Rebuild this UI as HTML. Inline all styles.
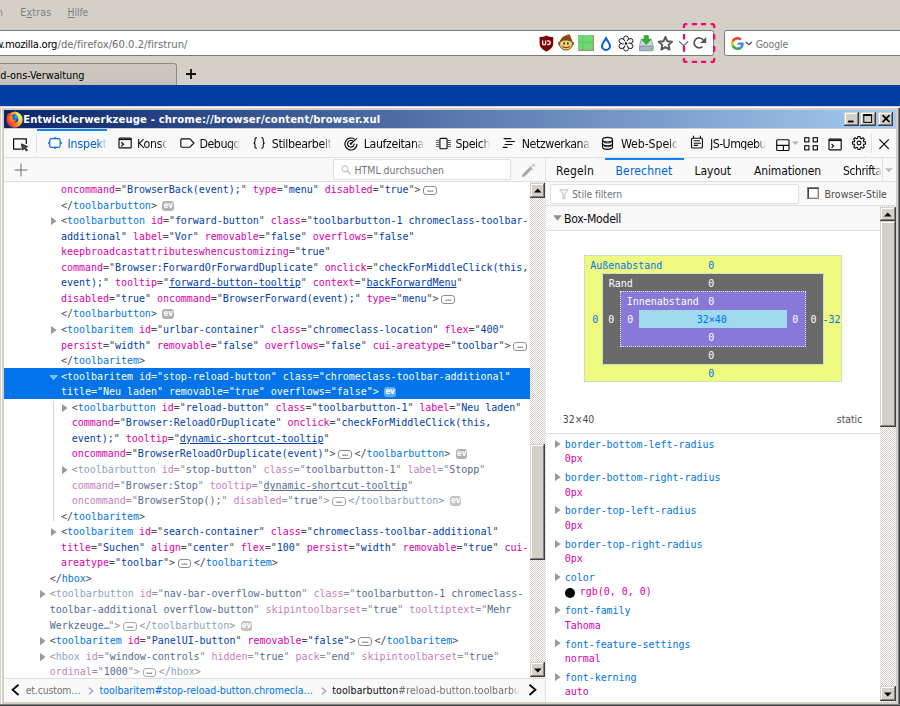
<!DOCTYPE html>
<html lang="de"><head><meta charset="utf-8"><title>Entwicklerwerkzeuge - chrome://browser/content/browser.xul</title>
<style>
html,body{margin:0;padding:0;overflow:hidden}
html{width:900px;height:706px}
body{width:900px;height:706px;overflow:hidden;position:relative;background:#d4d0c8;font-family:"DejaVu Sans Condensed","DejaVu Sans","Liberation Sans",sans-serif}
div,svg.ab,.tw{position:absolute}
.s{white-space:pre;line-height:1}
.s u{text-decoration:underline;text-underline-offset:1px}
.fade{-webkit-mask-image:linear-gradient(to right,#000 calc(100% - 9px),transparent 100%);mask-image:linear-gradient(to right,#000 calc(100% - 9px),transparent 100%)}
.m,.ln{font-family:"DejaVu Sans Mono","Liberation Mono",monospace;font-size:10px;letter-spacing:-0.03px;white-space:pre}
.m{line-height:1}
.ln{line-height:15.555px;height:15.555px;color:#4a4a4f}
.ln .t{color:#0074e8}.ln .a{color:#dd00a9}.ln .v{color:#003eaa}.ln .p{color:#4a4a4f}
.ln .u{text-decoration:underline}
.ln.sel,.ln.sel span{color:#fff}
.ln.dim{color:#8f8f95}.dim .t{color:#8fa3bd}.dim .a{color:#c781c0}.dim .v{color:#586b92}.dim .p{color:#8f8f95}.dim i.bv{background:#c4c4c6}.dim i.be{border-color:#a9a9ac}
.tw{fill:#9a9a9e}
.ln.sel .tw{fill:#7db9ff}
i.be,i.bv{display:inline-block;overflow:hidden;font-style:normal;box-sizing:border-box;position:relative;letter-spacing:0}
i.be{width:13.4px;height:9.7px;margin:0 2.7px 0 2.9px;border:1px solid #8d8d90;border-radius:3px;vertical-align:-2.2px}
i.be b{position:absolute;left:2.7px;top:-2.6px;font-size:10px;font-weight:normal;color:#77777c;line-height:10px}
i.bv{width:11.5px;height:9.7px;margin:0 0 0 5.6px;border-radius:3px;background:#b1b1b3;color:#fff;font-size:8px;line-height:10.6px;text-align:center;font-weight:bold;vertical-align:-1.7px;font-family:"DejaVu Sans Condensed","Liberation Sans",sans-serif}
.ln.sel i.bv{background:#5fa9f3}
.chk{background-image:repeating-conic-gradient(#ffffff 0 25%,#d4d0c8 0 50%);background-size:2px 2px}
.btn3{background:#d4d0c8;box-shadow:inset -1px -1px 0 #404040,inset 1px 1px 0 #d4d0c8,inset -2px -2px 0 #808080,inset 2px 2px 0 #fff}
.hl{background:#e0e0e2}
</style></head>
<body>
<!-- ===== browser chrome ===== -->
<div style="left:-10px;top:30px;width:722px;height:24px;background:#fff;border:1px solid #7b7b7b;border-radius:2.5px;box-sizing:content-box"></div>
<div style="left:724px;top:30px;width:200px;height:24px;background:#fff;border:1px solid #7b7b7b;border-radius:2.5px"></div>
<!-- tab -->
<div style="left:-10px;top:63px;width:185px;height:22.5px;background:linear-gradient(#ccc8c0 0%,#cac6be 70%,#bcb8b0 100%);border:1px solid #8c8a85;border-bottom:0;border-radius:0 3px 0 0"></div>
<svg class="ab" style="left:186px;top:69px" width="10" height="10" viewBox="0 0 10 10"><path d="M5 0V10M0 5H10" stroke="#0c0c0d" stroke-width="1.8" fill="none"/></svg>
<!-- desktop blue band -->
<div style="left:0;top:85px;width:900px;height:21px;background:#003da5"></div>
<!-- ===== devtools window frame ===== -->
<div style="left:0;top:105.7px;width:900px;height:601px;background:#d4d0c8"></div>
<div style="left:1px;top:106.6px;width:897px;height:600px;border-left:1px solid #fff;border-top:1px solid #fff"></div>
<div style="left:897.6px;top:108px;width:3px;height:600px;background:linear-gradient(to right,#808080 0,#808080 1.2px,#404040 1.2px)"></div>
<div style="left:0;top:703.7px;width:900px;height:3px;background:#808080"></div>
<div style="left:0;top:705px;width:900px;height:1px;background:#404040"></div>
<!-- title bar -->
<div style="left:4px;top:110px;width:892px;height:18px;background:linear-gradient(to right,#0a246a 0%,#a6caf0 100%)"></div>
<!-- window buttons -->
<div class="btn3" style="left:844.3px;top:112px;width:15.2px;height:14px"></div>
<div class="btn3" style="left:860.4px;top:112px;width:15.2px;height:14px"></div>
<div class="btn3" style="left:878.3px;top:112px;width:15.2px;height:14px"></div>
<svg class="ab" style="left:844px;top:112px" width="50" height="14" viewBox="0 0 50 14"><path d="M4 9.5H9.5" stroke="#000" stroke-width="1.9"/><rect x="19.8" y="3" width="7.8" height="7.4" fill="none" stroke="#000" stroke-width="1"/><path d="M19.3 3H28.1" stroke="#000" stroke-width="1.8"/><path d="M38.6 3.2L45.6 10.2M45.6 3.2L38.6 10.2" stroke="#000" stroke-width="1.7"/></svg>
<!-- content area -->
<div style="left:4px;top:128.6px;width:892px;height:573.4px;background:#fff"></div>
<!-- devtools main toolbar -->
<div style="left:4px;top:128.6px;width:892px;height:28.4px;background:#f9f9fa"></div>
<div class="hl" style="left:4px;top:157px;width:892px;height:1px"></div>
<div style="left:37px;top:128.7px;width:70px;height:2.2px;background:#0a84ff"></div>
<div class="hl" style="left:36px;top:133px;width:1px;height:20px"></div>
<div class="hl" style="left:871px;top:133px;width:1px;height:20px"></div>
<!-- markup toolbar + sidebar tabs -->
<div style="left:4px;top:158px;width:892px;height:23px;background:#f9f9fa"></div>
<div class="hl" style="left:4px;top:181px;width:892px;height:1px"></div>
<div class="hl" style="left:545px;top:158px;width:1px;height:544px"></div>
<div style="left:605px;top:158px;width:79px;height:2px;background:#0a84ff"></div>
<div class="hl" style="left:881.5px;top:158px;width:1px;height:23px"></div>
<!-- html search box -->
<div style="left:332.5px;top:159px;width:178.7px;height:20.5px;background:#fff;border:1px solid #e0e0e2;border-radius:2px;box-sizing:border-box"></div>
<!-- filter bar -->
<div style="left:546px;top:182px;width:350px;height:23px;background:#f9f9fa"></div>
<div class="hl" style="left:546px;top:205px;width:350px;height:1px"></div>
<div style="left:549.5px;top:184px;width:249.5px;height:19.5px;background:#fff;border:1px solid #e0e0e2;border-radius:2px;box-sizing:border-box"></div>
<div style="left:807px;top:187px;width:12.2px;height:12.2px;background:#fff;box-sizing:border-box;border:1px solid #808080;box-shadow:inset 1px 1px 0 #404040,inset -1px -1px 0 #d4d0c8"></div>
<!-- box model header -->
<div style="left:546px;top:206px;width:334px;height:24px;background:#f9f9fa"></div>
<div class="hl" style="left:546px;top:230px;width:334px;height:1px"></div>
<svg class="ab" style="left:552.5px;top:214.5px;fill:#8f8f93" width="9" height="6" viewBox="0 0 9 6"><path d="M0.2 0.3H8.8L4.5 5.7Z"/></svg>
<div class="hl" style="left:546px;top:433px;width:334px;height:1px"></div>
<!-- selected row -->
<div style="left:4px;top:368.2px;width:526px;height:30.7px;background:#0074e8"></div>
<!-- indent guide -->
<div style="left:53.2px;top:401px;width:1.2px;height:120px;background:#d4d4d8"></div>
<!-- left scrollbar -->
<div class="chk" style="left:530px;top:182px;width:15.5px;height:495.5px"></div>
<div class="btn3" style="left:530px;top:182.5px;width:15.3px;height:15px"></div>
<div class="btn3" style="left:530px;top:444.4px;width:15.3px;height:115.4px"></div>
<div class="btn3" style="left:530px;top:661.7px;width:15.3px;height:15.2px"></div>
<svg class="ab" style="left:534px;top:187.5px" width="8" height="5" viewBox="0 0 8 5"><path d="M0 4.6L3.8 0.5L7.6 4.6Z"/></svg>
<svg class="ab" style="left:534px;top:667.5px" width="8" height="5" viewBox="0 0 8 5"><path d="M0 0.4L3.8 4.5L7.6 0.4Z"/></svg>
<!-- right scrollbar -->
<div class="chk" style="left:880.4px;top:206px;width:15.6px;height:496px"></div>
<div class="btn3" style="left:880.4px;top:206.6px;width:15.3px;height:14.2px"></div>
<div class="btn3" style="left:880.4px;top:220.8px;width:15.3px;height:206.3px"></div>
<div class="btn3" style="left:880.4px;top:686.3px;width:15.3px;height:15px"></div>
<svg class="ab" style="left:884.4px;top:211.5px" width="8" height="5" viewBox="0 0 8 5"><path d="M0 4.6L3.8 0.5L7.6 4.6Z"/></svg>
<svg class="ab" style="left:884.4px;top:691.5px" width="8" height="5" viewBox="0 0 8 5"><path d="M0 0.4L3.8 4.5L7.6 0.4Z"/></svg>
<!-- breadcrumbs -->
<div style="left:4px;top:678px;width:541px;height:24px;background:#f9f9fa"></div>
<div class="hl" style="left:4px;top:677.5px;width:541px;height:1px"></div>
<svg class="ab" style="left:10.5px;top:684px" width="9" height="12" viewBox="0 0 9 12"><path d="M7.5 0.7L1.6 5.8L7.5 11" fill="none" stroke="#0c0c0d" stroke-width="1.9"/></svg>
<svg class="ab" style="left:527.5px;top:684px" width="9" height="12" viewBox="0 0 9 12"><path d="M1.5 0.7L7.4 5.8L1.5 11" fill="none" stroke="#0c0c0d" stroke-width="1.9"/></svg>
<svg class="ab" style="left:87.5px;top:686.5px" width="6" height="8" viewBox="0 0 6 8"><path d="M0.8 0.8L4.8 4L0.8 7.2" fill="none" stroke="#9a9ad0" stroke-width="1.3"/></svg>
<svg class="ab" style="left:320.5px;top:686.5px" width="6" height="8" viewBox="0 0 6 8"><path d="M0.8 0.8L4.8 4L0.8 7.2" fill="none" stroke="#9a9ad0" stroke-width="1.3"/></svg>
<!-- firefox logo -->
<svg class="ab" style="left:5.5px;top:110.5px" width="17" height="17" viewBox="0 0 17 17">
<defs><linearGradient id="fxg" x1="0" y1="0.75" x2="1" y2="0.25"><stop offset="0" stop-color="#f5184c"/><stop offset="0.3" stop-color="#ff5a1f"/><stop offset="0.62" stop-color="#ffa51f"/><stop offset="0.85" stop-color="#ffd83a"/><stop offset="1" stop-color="#fff36e"/></linearGradient>
<radialGradient id="fxb" cx="0.6" cy="0.3" r="0.8"><stop offset="0" stop-color="#00b8f0"/><stop offset="0.5" stop-color="#1560e0"/><stop offset="1" stop-color="#3a2a9a"/></radialGradient></defs>
<circle cx="8.6" cy="8.7" r="8" fill="url(#fxg)"/>
<path d="M1.4 6.6C0.8 4.6 1.5 2.8 2.5 1.8C2.8 3 3.5 3.6 4.6 4Z" fill="#ff3a2a"/>
<path d="M9.4 0.3C10.4 0.9 11.2 2 11.4 3.2L9.2 2.6Z" fill="#ffd83a"/>
<circle cx="9.2" cy="7.2" r="4.3" fill="url(#fxb)"/>
<path d="M3.4 5.4C5 4.6 6.6 5 7.4 6.2C6.6 6.6 6.4 7.4 7 8.2C7.8 9 9.2 8.8 10 8.2C9.8 10.4 7.8 11.6 5.9 11C4 10.4 3 8 3.4 5.4Z" fill="#ff7a1f"/>
<path d="M10 0.9C12.6 1.9 14.6 4.2 14.6 7.2C14.6 9.6 13 11.6 11 12.2C12.6 10.8 13 8.6 12 6.8C11.8 5.6 11.4 4.6 10.2 3.8C10.8 2.8 10.6 1.8 10 0.9Z" fill="#ffe44a"/>
</svg>
<!-- pick element -->
<svg class="ab" style="left:12px;top:137px" width="18" height="15" viewBox="0 0 18 15"><path d="M9.6 12.1H1.6V1.8H14.3V7" fill="none" stroke="#0c0c0d" stroke-width="1.2"/><path d="M9.3 6.8L15.8 9.6L13.3 10.6L15.6 13.2L14.4 14.1L12.2 11.4L10.6 13.2Z" fill="#4a4a4f" stroke="#0c0c0d" stroke-width=".7"/></svg>
<!-- inspector -->
<svg class="ab" style="left:46px;top:135px" width="18" height="16" viewBox="0 0 18 16"><rect x="3.7" y="3.7" width="10.5" height="8.6" rx="1.8" fill="none" stroke="#0a6ce6" stroke-width="1.25"/><path d="M9 2V3.4M9 12.6V14M2 8H3.4M14.6 8H16" stroke="#0a6ce6" stroke-width="1.3"/></svg>
<!-- console -->
<svg class="ab" style="left:117px;top:136px" width="16" height="14" viewBox="0 0 16 14"><rect x="2" y="2" width="12.2" height="9.9" rx="1" fill="none" stroke="#0c0c0d" stroke-width="1.15"/><path d="M2 3.3H14.2" stroke="#0c0c0d" stroke-width="1.6"/><path d="M4.2 6.2L6.6 8.3L4.2 10.4" fill="none" stroke="#0c0c0d" stroke-width="1.2"/></svg>
<!-- debugger -->
<svg class="ab" style="left:179px;top:136px" width="17" height="14" viewBox="0 0 17 14"><path d="M2.9 2.8H10.8L15 7L10.8 11.2H2.9Q1.8 11.2 1.8 10.1V3.9Q1.8 2.8 2.9 2.8Z" fill="none" stroke="#0c0c0d" stroke-width="1.15"/></svg>
<!-- style editor braces -->
<svg class="ab" style="left:252px;top:136px" width="15" height="14" viewBox="0 0 15 14"><path d="M4.8 1.6Q3 1.6 3 3.2V5.2Q3 7 1.4 7Q3 7 3 8.8V10.8Q3 12.4 4.8 12.4" fill="none" stroke="#0c0c0d" stroke-width="1.1"/><path d="M9.4 1.6Q11.2 1.6 11.2 3.2V5.2Q11.2 7 12.8 7Q11.2 7 11.2 8.8V10.8Q11.2 12.4 9.4 12.4" fill="none" stroke="#0c0c0d" stroke-width="1.1"/></svg>
<!-- performance -->
<svg class="ab" style="left:343px;top:135.5px" width="16" height="15" viewBox="0 0 16 15"><path d="M11.6 3.2A6 6 0 1 0 14 8" fill="none" stroke="#0c0c0d" stroke-width="1.2"/><path d="M10.2 5.4A3.3 3.3 0 1 0 11.2 7.6" fill="none" stroke="#0c0c0d" stroke-width="1.2"/><path d="M8 7.6L14 2.4" stroke="#0c0c0d" stroke-width="1.15"/><circle cx="8" cy="7.6" r="1.2" fill="#0c0c0d"/></svg>
<!-- memory -->
<svg class="ab" style="left:434.5px;top:136.5px" width="17" height="13" viewBox="0 0 17 13"><rect x="4.9" y="1.3" width="7.2" height="10.4" rx="1" fill="none" stroke="#0c0c0d" stroke-width="1.15"/><path d="M1 3.5H4M1 5.5H4M1 7.5H4M1 9.5H4M13 3.5H16M13 5.5H16M13 7.5H16M13 9.5H16" stroke="#4a4a4f" stroke-width=".9"/></svg>
<!-- network -->
<svg class="ab" style="left:502px;top:137px" width="14" height="12" viewBox="0 0 14 12"><path d="M1.6 1.6H9.3M3.9 4.5H12.9M2.6 7.5H10.4M0.8 10.4H5.4" stroke="#0c0c0d" stroke-width="1.2"/></svg>
<!-- storage -->
<svg class="ab" style="left:600px;top:135px" width="15" height="16" viewBox="600 135 15 16"><g fill="none" stroke="#0c0c0d" stroke-width="1.15"><ellipse cx="607.5" cy="139.7" rx="5" ry="2.3"/><path d="M602.5 139.7V147.1A5 2.3 0 0 0 612.5 147.1V139.7"/><path d="M602.5 143.4A5 2.3 0 0 0 612.5 143.4"/><path d="M603.6 142.3A4.4 1.4 0 0 0 611.4 142.3M603.6 146A4.4 1.4 0 0 0 611.4 146" stroke-width=".8"/></g></svg>
<!-- scratchpad -->
<svg class="ab" style="left:690px;top:135px" width="14" height="15" viewBox="0 0 14 15"><rect x="1.5" y="3.2" width="10.9" height="9.8" rx="1" fill="none" stroke="#0c0c0d" stroke-width="1.1"/><path d="M3.5 0.8V3.2M10.4 0.8V3.2" stroke="#0c0c0d" stroke-width="1.15"/><path d="M3.7 5.8H9.9M3.7 8.2H11M3.7 10.4H7.9" stroke="#0c0c0d" stroke-width="1.1"/></svg>
<!-- layout chooser -->
<svg class="ab" style="left:775px;top:137.5px" width="25" height="14" viewBox="0 0 25 14"><rect x="1.7" y="1.7" width="12.3" height="10.8" rx=".8" fill="none" stroke="#0c0c0d" stroke-width="1.15"/><path d="M1.7 7.3H14M8.4 7.3V12.5" stroke="#0c0c0d" stroke-width="1.15"/><path d="M17.1 3.6H23.7L20.4 7.1Z" fill="#b1b1b3"/></svg>
<!-- grid -->
<svg class="ab" style="left:803px;top:136px" width="16" height="16" viewBox="803 136 16 16"><g fill="none" stroke="#0c0c0d" stroke-width="1.15"><rect x="804.7" y="137.7" width="4.2" height="4.2"/><rect x="813.2" y="137.7" width="4.2" height="4.2"/><rect x="804.7" y="145.7" width="4.2" height="4.2"/><rect x="813.2" y="145.7" width="4.2" height="4.2"/></g></svg>
<!-- split console -->
<svg class="ab" style="left:827px;top:137px" width="16" height="15" viewBox="0 0 16 15"><rect x="2" y="2" width="12.2" height="10.8" rx=".8" fill="none" stroke="#0c0c0d" stroke-width="1.15"/><path d="M2 3.2H14.2" stroke="#0c0c0d" stroke-width="1.7"/><path d="M4.6 7L6.6 8.9L4.6 10.8" fill="none" stroke="#0c0c0d" stroke-width="1.15"/></svg>
<!-- gear -->
<svg class="ab" style="left:850.5px;top:135px" width="16" height="16" viewBox="-8 -8 16 16"><path d="M-1.26 -4.74 L-1.12 -6.50 L1.12 -6.50 L1.26 -4.74 L2.46 -4.24 L3.81 -5.39 L5.39 -3.81 L4.24 -2.46 L4.74 -1.26 L6.50 -1.12 L6.50 1.12 L4.74 1.26 L4.24 2.46 L5.39 3.81 L3.81 5.39 L2.46 4.24 L1.26 4.74 L1.12 6.50 L-1.12 6.50 L-1.26 4.74 L-2.46 4.24 L-3.81 5.39 L-5.39 3.81 L-4.24 2.46 L-4.74 1.26 L-6.50 1.12 L-6.50 -1.12 L-4.74 -1.26 L-4.24 -2.46 L-5.39 -3.81 L-3.81 -5.39 L-2.46 -4.24Z" fill="none" stroke="#0c0c0d" stroke-width="1.1" stroke-linejoin="round"/><circle r="1.9" fill="none" stroke="#0c0c0d" stroke-width="1.1"/></svg>
<!-- close x -->
<svg class="ab" style="left:878px;top:138px" width="12" height="12" viewBox="0 0 12 12"><path d="M1.4 1.3L10.8 10.9M10.8 1.3L1.4 10.9" stroke="#0c0c0d" stroke-width="1.2"/></svg>
<!-- plus (new node) -->
<svg class="ab" style="left:13.5px;top:162.5px" width="14" height="14" viewBox="0 0 14 14"><path d="M7 0.6V13.4M0.6 7H13.4" stroke="#6a6a6f" stroke-width="1"/></svg>
<!-- magnifier -->
<svg class="ab" style="left:341px;top:165px" width="11" height="10" viewBox="0 0 11 10"><circle cx="4" cy="3.8" r="3.1" fill="none" stroke="#b9b9bc" stroke-width="1"/><path d="M6.3 6.2L10 9.4" stroke="#b9b9bc" stroke-width="1.2"/></svg>
<!-- eyedropper -->
<svg class="ab" style="left:521px;top:163px" width="15" height="15" viewBox="0 0 15 15"><path d="M1.2 13.8L2 11.2L8.6 4.6L10.4 6.4L3.8 13Z" fill="#a9a9ac" stroke="#9a9a9d" stroke-width=".6"/><path d="M8.2 3L12 6.8" stroke="#9a9a9d" stroke-width="1"/><path d="M10 4.6L13.6 1M11.4 0.6L14.2 3.6" stroke="#a4a4a7" stroke-width=".9"/></svg>
<!-- filter funnel -->
<svg class="ab" style="left:558.5px;top:188.5px" width="10" height="11" viewBox="0 0 10 11"><path d="M0.7 0.8H8.9L5.8 5V9.8H3.9V5Z" fill="#f4f4f5" stroke="#c2c2c5" stroke-width="1"/></svg>
<!-- sidebar tabs dropdown arrow -->
<svg class="ab" style="left:885px;top:168px" width="8" height="5" viewBox="0 0 8 5"><path d="M0 0.2H7.6L3.8 4.2Z" fill="#b9b9bc"/></svg>
<!-- ===== browser toolbar icons ===== -->
<!-- ublock -->
<svg class="ab" style="left:538.5px;top:34.5px" width="15" height="17" viewBox="0 0 15 17"><path d="M7.4 0.4C5.4 1.6 3 2 0.6 2.1V8.4C0.6 12.4 4.4 15 7.4 16.4C10.4 15 14.2 12.4 14.2 8.4V2.1C11.8 2 9.4 1.6 7.4 0.4Z" fill="#800000"/><path d="M3.6 5.6V8.4Q3.6 9.9 5.1 9.9Q6.6 9.9 6.6 8.4V5.6" fill="none" stroke="#fff" stroke-width="1.3"/><path d="M8.2 5.9H9.4Q11.2 5.9 11.2 7.7Q11.2 9.5 9.4 9.5H8.2" fill="none" stroke="#fff" stroke-width="1.3"/></svg>
<!-- greasemonkey -->
<svg class="ab" style="left:557.5px;top:34px" width="16" height="17" viewBox="0 0 16 17"><circle cx="1.6" cy="9.6" r="1.5" fill="#e0a850" stroke="#6b3d0c" stroke-width=".7"/><circle cx="14.4" cy="9.6" r="1.5" fill="#e0a850" stroke="#6b3d0c" stroke-width=".7"/><ellipse cx="8" cy="10" rx="6.5" ry="6.1" fill="#f5cb72" stroke="#6b3d0c" stroke-width=".9"/><path d="M2.3 7.8C2.8 3.6 6.4 1.7 11.9 0.6C11.3 1.6 11.7 2.2 12.7 2.6C12.1 3 12.3 3.8 13.1 4.4C13.6 5.6 13.7 6.6 13.7 7.8C11 5.6 5 5.6 2.3 7.8Z" fill="#8a4a10" stroke="#6b3d0c" stroke-width=".5"/><ellipse cx="5.9" cy="9.3" rx="1.5" ry="1.8" fill="#e8f0c0"/><ellipse cx="10.1" cy="9.3" rx="1.5" ry="1.8" fill="#e8f0c0"/><ellipse cx="6.1" cy="9.4" rx=".8" ry="1.3" fill="#0a3a10"/><ellipse cx="9.9" cy="9.4" rx=".8" ry="1.3" fill="#0a3a10"/><path d="M4 12.6Q8 15 12 12.6" fill="none" stroke="#7a2a10" stroke-width="1"/></svg>
<!-- green square -->
<svg class="ab" style="left:578px;top:35px" width="16" height="16" viewBox="0 0 16 16"><rect x="0" y="0" width="15.8" height="15.8" fill="#6fd873"/><path d="M0 7.4H15.8M4.8 0V15.8" stroke="#5cc765" stroke-width="1.2"/><path d="M15.4 0V15.8M0 15.4H15.8" stroke="#b8706a" stroke-width=".8"/></svg>
<!-- blue drop -->
<svg class="ab" style="left:600px;top:36px" width="12" height="15" viewBox="0 0 12 15"><path d="M6 2.2C4.6 5 2 7.4 2 10A4 3.9 0 0 0 10 10C10 7.4 7.4 5 6 2.2Z" fill="none" stroke="#0a5ae0" stroke-width="2"/></svg>
<!-- flower -->
<svg class="ab" style="left:618px;top:34.5px" width="16" height="17" viewBox="-8 -8.5 16 17"><g fill="#fff" stroke="#1a1a1a" stroke-width=".9"><ellipse cx="0" cy="-4.6" rx="2.5" ry="3"/><ellipse cx="0" cy="4.6" rx="2.5" ry="3"/><ellipse cx="0" cy="-4.6" rx="2.5" ry="3" transform="rotate(60)"/><ellipse cx="0" cy="-4.6" rx="2.5" ry="3" transform="rotate(120)"/><ellipse cx="0" cy="-4.6" rx="2.5" ry="3" transform="rotate(240)"/><ellipse cx="0" cy="-4.6" rx="2.5" ry="3" transform="rotate(300)"/></g><circle r="2.4" fill="#fff"/><circle r="1.3" fill="#111"/></svg>
<!-- download tray -->
<svg class="ab" style="left:639px;top:34.5px" width="15" height="17" viewBox="0 0 15 17"><path d="M2.2 4.2H12.4L14.2 11.4H0.4Z" fill="#cfd8e0" stroke="#7f8c99" stroke-width=".7"/><rect x="0.4" y="11.2" width="13.8" height="4.6" rx=".8" fill="#aab6c2" stroke="#71808e" stroke-width=".7"/><circle cx="12" cy="13.6" r=".7" fill="#3c3"/><path d="M5.2 0.6H9.4V4.6H12L7.3 9.6L2.6 4.6H5.2Z" fill="#2fb52f" stroke="#1a8a1a" stroke-width=".6"/></svg>
<!-- star -->
<svg class="ab" style="left:656.5px;top:34.5px" width="17" height="17" viewBox="0 0 17 17"><path d="M8.4 1.9L10.35 6.3L15.1 6.75L11.5 9.9L12.55 14.6L8.4 12.15L4.25 14.6L5.3 9.9L1.7 6.75L6.45 6.3Z" fill="none" stroke="#585858" stroke-width="1.9" stroke-linejoin="round"/></svg>
<!-- dropmarker chevron -->
<svg class="ab" style="left:677.5px;top:40px" width="11" height="7" viewBox="0 0 11 7"><path d="M1 1.4L5.7 5.7L10.2 1.4" fill="none" stroke="#6a6a6a" stroke-width="1.2"/></svg>
<!-- reload -->
<svg class="ab" style="left:692px;top:36px" width="16" height="14" viewBox="692 36 16 14"><path d="M703.2 40.1A4.95 4.95 0 1 0 702.4 46.6" fill="none" stroke="#555" stroke-width="1.7"/><path d="M706.2 36.9V42.9H700.2Z" fill="#555"/></svg>
<!-- google G -->
<svg class="ab" style="left:730.5px;top:36.5px" width="13" height="13" viewBox="0 0 48 48"><path fill="#EA4335" d="M24 9.5c3.54 0 6.71 1.22 9.21 3.6l6.85-6.85C35.9 2.38 30.47 0 24 0 14.62 0 6.51 5.38 2.56 13.22l7.98 6.19C12.43 13.72 17.74 9.5 24 9.5z"/><path fill="#4285F4" d="M46.98 24.55c0-1.57-.15-3.09-.38-4.55H24v9.02h12.94c-.58 2.96-2.26 5.48-4.78 7.18l7.73 6c4.51-4.18 7.09-10.36 7.09-17.65z"/><path fill="#FBBC05" d="M10.53 28.59c-.48-1.45-.76-2.99-.76-4.59s.27-3.14.76-4.59l-7.98-6.19C.92 16.46 0 20.12 0 24c0 3.88.92 7.54 2.56 10.78l7.97-6.19z"/><path fill="#34A853" d="M24 48c6.48 0 11.93-2.13 15.89-5.81l-7.73-6c-2.15 1.45-4.92 2.3-8.16 2.3-6.26 0-11.57-4.22-13.47-9.91l-7.98 6.19C6.51 42.62 14.62 48 24 48z"/></svg>
<svg class="ab" style="left:745px;top:40.5px" width="8" height="5" viewBox="0 0 8 5"><path d="M0.9 0.9L3.9 3.7L6.9 0.9" fill="none" stroke="#4a4a4f" stroke-width="1.3"/></svg>
<!-- highlighter dashed box -->
<svg class="ab" style="left:680px;top:20px" width="40" height="46" viewBox="680 20 40 46"><g fill="none" stroke="#ff0066" stroke-width="2.2"><path d="M684 27.9V25.8Q684 24.1 685.7 24.1H687.3M710.7 24.1H712.5Q714.2 24.1 714.2 25.8V27.9M714.2 58V60.2Q714.2 61.9 712.5 61.9H710.7M687.3 61.9H685.7Q684 61.9 684 60.2V58"/><path d="M691.9 24.1H697.1M701.1 24.1H706.1M691.9 61.9H697.1M701.1 61.9H706.1M684 34.1V39.6M684 46V51.8M714.2 34.1V39.4M714.2 46V51.7"/></g></svg>

<!-- ===== code ===== -->
<div class="ln" style="left:61.0px;top:182.00px"><span class="a">oncommand</span><span class="p">=</span><span class="p">"</span><span class="v">BrowserBack(event);</span><span class="p">"</span> <span class="a">type</span><span class="p">=</span><span class="p">"</span><span class="v">menu</span><span class="p">"</span> <span class="a">disabled</span><span class="p">=</span><span class="p">"</span><span class="v">true</span><span class="p">"</span><span class="p">&gt;</span><i class="be"><b>…</b></i></div>
<div class="ln" style="left:61.0px;top:198.00px"><span class="p">&lt;/</span><span class="t">toolbarbutton</span><span class="p">&gt;</span><i class="bv">ev</i></div>
<div class="ln" style="left:61.0px;top:213.00px"><svg class="tw" style="left:-9.9px;top:4.2px" width="5.6" height="8.2" viewBox="0 0 6 9" preserveAspectRatio="none"><path d="M0 0 L6 4.5 L0 9Z"/></svg><span class="p">&lt;</span><span class="t">toolbarbutton</span> <span class="a">id</span><span class="p">=</span><span class="p">"</span><span class="v">forward-button</span><span class="p">"</span> <span class="a">class</span><span class="p">=</span><span class="p">"</span><span class="v">toolbarbutton-1 chromeclass-toolbar-</span></div>
<div class="ln" style="left:61.0px;top:229.00px"><span class="v">additional</span><span class="p">"</span> <span class="a">label</span><span class="p">=</span><span class="p">"</span><span class="v">Vor</span><span class="p">"</span> <span class="a">removable</span><span class="p">=</span><span class="p">"</span><span class="v">false</span><span class="p">"</span> <span class="a">overflows</span><span class="p">=</span><span class="p">"</span><span class="v">false</span><span class="p">"</span></div>
<div class="ln" style="left:61.0px;top:244.00px"><span class="a">keepbroadcastattributeswhencustomizing</span><span class="p">=</span><span class="p">"</span><span class="v">true</span><span class="p">"</span></div>
<div class="ln" style="left:61.0px;top:260.00px"><span class="a">command</span><span class="p">=</span><span class="p">"</span><span class="v">Browser:ForwardOrForwardDuplicate</span><span class="p">"</span> <span class="a">onclick</span><span class="p">=</span><span class="p">"</span><span class="v">checkForMiddleClick(this,</span></div>
<div class="ln" style="left:61.0px;top:275.00px"><span class="v">event);</span><span class="p">"</span> <span class="a">tooltip</span><span class="p">=</span><span class="p">"</span><span class="v u">forward-button-tooltip</span><span class="p">"</span> <span class="a">context</span><span class="p">=</span><span class="p">"</span><span class="v u">backForwardMenu</span><span class="p">"</span></div>
<div class="ln" style="left:61.0px;top:291.00px"><span class="a">disabled</span><span class="p">=</span><span class="p">"</span><span class="v">true</span><span class="p">"</span> <span class="a">oncommand</span><span class="p">=</span><span class="p">"</span><span class="v">BrowserForward(event);</span><span class="p">"</span> <span class="a">type</span><span class="p">=</span><span class="p">"</span><span class="v">menu</span><span class="p">"</span><span class="p">&gt;</span><i class="be"><b>…</b></i></div>
<div class="ln" style="left:61.0px;top:306.00px"><span class="p">&lt;/</span><span class="t">toolbarbutton</span><span class="p">&gt;</span><i class="bv">ev</i></div>
<div class="ln" style="left:61.0px;top:322.00px"><svg class="tw" style="left:-9.9px;top:4.2px" width="5.6" height="8.2" viewBox="0 0 6 9" preserveAspectRatio="none"><path d="M0 0 L6 4.5 L0 9Z"/></svg><span class="p">&lt;</span><span class="t">toolbaritem</span> <span class="a">id</span><span class="p">=</span><span class="p">"</span><span class="v">urlbar-container</span><span class="p">"</span> <span class="a">class</span><span class="p">=</span><span class="p">"</span><span class="v">chromeclass-location</span><span class="p">"</span> <span class="a">flex</span><span class="p">=</span><span class="p">"</span><span class="v">400</span><span class="p">"</span></div>
<div class="ln" style="left:61.0px;top:338.00px"><span class="a">persist</span><span class="p">=</span><span class="p">"</span><span class="v">width</span><span class="p">"</span> <span class="a">removable</span><span class="p">=</span><span class="p">"</span><span class="v">false</span><span class="p">"</span> <span class="a">overflows</span><span class="p">=</span><span class="p">"</span><span class="v">false</span><span class="p">"</span> <span class="a">cui-areatype</span><span class="p">=</span><span class="p">"</span><span class="v">toolbar</span><span class="p">"</span><span class="p">&gt;</span><i class="be"><b>…</b></i></div>
<div class="ln" style="left:61.0px;top:353.00px"><span class="p">&lt;/</span><span class="t">toolbaritem</span><span class="p">&gt;</span></div>
<div class="ln sel" style="left:61.0px;top:369.00px"><svg class="tw" style="left:-12.2px;top:5.6px" width="9.4" height="5.4" viewBox="0 0 10 6" preserveAspectRatio="none"><path d="M0 0 L10 0 L5 6Z"/></svg><span class="p">&lt;</span><span class="t">toolbaritem</span> <span class="a">id</span><span class="p">=</span><span class="p">"</span><span class="v">stop-reload-button</span><span class="p">"</span> <span class="a">class</span><span class="p">=</span><span class="p">"</span><span class="v">chromeclass-toolbar-additional</span><span class="p">"</span></div>
<div class="ln sel" style="left:61.0px;top:384.00px"><span class="a">title</span><span class="p">=</span><span class="p">"</span><span class="v">Neu laden</span><span class="p">"</span> <span class="a">removable</span><span class="p">=</span><span class="p">"</span><span class="v">true</span><span class="p">"</span> <span class="a">overflows</span><span class="p">=</span><span class="p">"</span><span class="v">false</span><span class="p">"</span><span class="p">&gt;</span><i class="bv">ev</i></div>
<div class="ln" style="left:71.8px;top:400.00px"><svg class="tw" style="left:-9.9px;top:4.2px" width="5.6" height="8.2" viewBox="0 0 6 9" preserveAspectRatio="none"><path d="M0 0 L6 4.5 L0 9Z"/></svg><span class="p">&lt;</span><span class="t">toolbarbutton</span> <span class="a">id</span><span class="p">=</span><span class="p">"</span><span class="v">reload-button</span><span class="p">"</span> <span class="a">class</span><span class="p">=</span><span class="p">"</span><span class="v">toolbarbutton-1</span><span class="p">"</span> <span class="a">label</span><span class="p">=</span><span class="p">"</span><span class="v">Neu laden</span><span class="p">"</span></div>
<div class="ln" style="left:71.8px;top:415.00px"><span class="a">command</span><span class="p">=</span><span class="p">"</span><span class="v">Browser:ReloadOrDuplicate</span><span class="p">"</span> <span class="a">onclick</span><span class="p">=</span><span class="p">"</span><span class="v">checkForMiddleClick(this,</span></div>
<div class="ln" style="left:71.8px;top:431.00px"><span class="v">event);</span><span class="p">"</span> <span class="a">tooltip</span><span class="p">=</span><span class="p">"</span><span class="v u">dynamic-shortcut-tooltip</span><span class="p">"</span></div>
<div class="ln" style="left:71.8px;top:446.00px"><span class="a">oncommand</span><span class="p">=</span><span class="p">"</span><span class="v">BrowserReloadOrDuplicate(event)</span><span class="p">"</span><span class="p">&gt;</span><i class="be"><b>…</b></i><span class="p">&lt;/</span><span class="t">toolbarbutton</span><span class="p">&gt;</span><i class="bv">ev</i></div>
<div class="ln dim" style="left:71.8px;top:462.00px"><svg class="tw" style="left:-9.9px;top:4.2px" width="5.6" height="8.2" viewBox="0 0 6 9" preserveAspectRatio="none"><path d="M0 0 L6 4.5 L0 9Z"/></svg><span class="p">&lt;</span><span class="t">toolbarbutton</span> <span class="a">id</span><span class="p">=</span><span class="p">"</span><span class="v">stop-button</span><span class="p">"</span> <span class="a">class</span><span class="p">=</span><span class="p">"</span><span class="v">toolbarbutton-1</span><span class="p">"</span> <span class="a">label</span><span class="p">=</span><span class="p">"</span><span class="v">Stopp</span><span class="p">"</span></div>
<div class="ln dim" style="left:71.8px;top:478.00px"><span class="a">command</span><span class="p">=</span><span class="p">"</span><span class="v">Browser:Stop</span><span class="p">"</span> <span class="a">tooltip</span><span class="p">=</span><span class="p">"</span><span class="v u">dynamic-shortcut-tooltip</span><span class="p">"</span></div>
<div class="ln dim" style="left:71.8px;top:493.00px"><span class="a">oncommand</span><span class="p">=</span><span class="p">"</span><span class="v">BrowserStop();</span><span class="p">"</span> <span class="a">disabled</span><span class="p">=</span><span class="p">"</span><span class="v">true</span><span class="p">"</span><span class="p">&gt;</span><i class="be"><b>…</b></i><span class="p">&lt;/</span><span class="t">toolbarbutton</span><span class="p">&gt;</span><i class="bv">ev</i></div>
<div class="ln" style="left:61.0px;top:509.00px"><span class="p">&lt;/</span><span class="t">toolbaritem</span><span class="p">&gt;</span></div>
<div class="ln" style="left:61.0px;top:524.00px"><svg class="tw" style="left:-9.9px;top:4.2px" width="5.6" height="8.2" viewBox="0 0 6 9" preserveAspectRatio="none"><path d="M0 0 L6 4.5 L0 9Z"/></svg><span class="p">&lt;</span><span class="t">toolbaritem</span> <span class="a">id</span><span class="p">=</span><span class="p">"</span><span class="v">search-container</span><span class="p">"</span> <span class="a">class</span><span class="p">=</span><span class="p">"</span><span class="v">chromeclass-toolbar-additional</span><span class="p">"</span></div>
<div class="ln" style="left:61.0px;top:540.00px"><span class="a">title</span><span class="p">=</span><span class="p">"</span><span class="v">Suchen</span><span class="p">"</span> <span class="a">align</span><span class="p">=</span><span class="p">"</span><span class="v">center</span><span class="p">"</span> <span class="a">flex</span><span class="p">=</span><span class="p">"</span><span class="v">100</span><span class="p">"</span> <span class="a">persist</span><span class="p">=</span><span class="p">"</span><span class="v">width</span><span class="p">"</span> <span class="a">removable</span><span class="p">=</span><span class="p">"</span><span class="v">true</span><span class="p">"</span> <span class="a">cui-</span></div>
<div class="ln" style="left:61.0px;top:555.00px"><span class="a">areatype</span><span class="p">=</span><span class="p">"</span><span class="v">toolbar</span><span class="p">"</span><span class="p">&gt;</span><i class="be"><b>…</b></i><span class="p">&lt;/</span><span class="t">toolbaritem</span><span class="p">&gt;</span></div>
<div class="ln" style="left:49.8px;top:571.00px"><span class="p">&lt;/</span><span class="t">hbox</span><span class="p">&gt;</span></div>
<div class="ln dim" style="left:49.8px;top:586.00px"><svg class="tw" style="left:-9.9px;top:4.2px" width="5.6" height="8.2" viewBox="0 0 6 9" preserveAspectRatio="none"><path d="M0 0 L6 4.5 L0 9Z"/></svg><span class="p">&lt;</span><span class="t">toolbarbutton</span> <span class="a">id</span><span class="p">=</span><span class="p">"</span><span class="v">nav-bar-overflow-button</span><span class="p">"</span> <span class="a">class</span><span class="p">=</span><span class="p">"</span><span class="v">toolbarbutton-1 chromeclass-</span></div>
<div class="ln dim" style="left:49.8px;top:602.00px"><span class="v">toolbar-additional overflow-button</span><span class="p">"</span> <span class="a">skipintoolbarset</span><span class="p">=</span><span class="p">"</span><span class="v">true</span><span class="p">"</span> <span class="a">tooltiptext</span><span class="p">=</span><span class="p">"</span><span class="v">Mehr</span></div>
<div class="ln dim" style="left:49.8px;top:618.00px"><span class="v">Werkzeuge<span style="letter-spacing:-1.4px">…</span></span><span class="p">"</span><span class="p">&gt;</span><i class="be"><b>…</b></i><span class="p">&lt;/</span><span class="t">toolbarbutton</span><span class="p">&gt;</span><i class="bv">ev</i></div>
<div class="ln" style="left:49.8px;top:633.00px"><svg class="tw" style="left:-9.9px;top:4.2px" width="5.6" height="8.2" viewBox="0 0 6 9" preserveAspectRatio="none"><path d="M0 0 L6 4.5 L0 9Z"/></svg><span class="p">&lt;</span><span class="t">toolbaritem</span> <span class="a">id</span><span class="p">=</span><span class="p">"</span><span class="v">PanelUI-button</span><span class="p">"</span> <span class="a">removable</span><span class="p">=</span><span class="p">"</span><span class="v">false</span><span class="p">"</span><span class="p">&gt;</span><i class="be"><b>…</b></i><span class="p">&lt;/</span><span class="t">toolbaritem</span><span class="p">&gt;</span></div>
<div class="ln dim" style="left:49.8px;top:649.00px"><svg class="tw" style="left:-9.9px;top:4.2px" width="5.6" height="8.2" viewBox="0 0 6 9" preserveAspectRatio="none"><path d="M0 0 L6 4.5 L0 9Z"/></svg><span class="p">&lt;</span><span class="t">hbox</span> <span class="a">id</span><span class="p">=</span><span class="p">"</span><span class="v">window-controls</span><span class="p">"</span> <span class="a">hidden</span><span class="p">=</span><span class="p">"</span><span class="v">true</span><span class="p">"</span> <span class="a">pack</span><span class="p">=</span><span class="p">"</span><span class="v">end</span><span class="p">"</span> <span class="a">skipintoolbarset</span><span class="p">=</span><span class="p">"</span><span class="v">true</span><span class="p">"</span></div>
<div class="ln dim" style="left:49.8px;top:664.00px"><span class="a">ordinal</span><span class="p">=</span><span class="p">"</span><span class="v">1000</span><span class="p">"</span><span class="p">&gt;</span><i class="be"><b>…</b></i><span class="p">&lt;/</span><span class="t">hbox</span><span class="p">&gt;</span></div>
<!-- ===== sans text ===== -->
<div class="s" id="s0" style="left:-3.0px;top:7.00px;font-size:10.4px;color:#808080;letter-spacing:-0.300px;">n</div>
<div class="s" id="s1" style="left:20.3px;top:7.00px;font-size:10.6px;color:#808080;letter-spacing:0.143px;">E<u>x</u>tras</div>
<div class="s" id="s2" style="left:67.5px;top:7.00px;font-size:10.4px;color:#808080;letter-spacing:-0.099px;"><u>H</u>ilfe</div>
<div class="s" id="s3" style="left:-40.0px;width:97.2px;text-align:right;top:39.00px;font-size:11.2px;color:#000;letter-spacing:-0.300px;">www.mozilla.org</div>
<div class="s" id="s4" style="left:57.5px;top:39.00px;font-size:11.2px;color:#6e6e6e;letter-spacing:0.006px;">/de/firefox/60.0.2/firstrun/</div>
<div class="s" id="s5" style="left:0.3px;top:71.00px;font-size:10.8px;color:#000;letter-spacing:-0.024px;">d-ons-Verwaltung</div>
<div class="s" id="s6" style="left:755.7px;top:39.00px;font-size:10.4px;color:#737373;letter-spacing:-0.061px;">Google</div>
<div class="s" id="s7" style="left:23.2px;top:114.00px;font-size:11.2px;color:#fff;letter-spacing:0.144px;font-weight:bold;">Entwicklerwerkzeuge - chrome://browser/content/browser.xul</div>
<div class="s fade" id="s8" style="left:67.5px;top:138.00px;font-size:12.3px;color:#0060df;letter-spacing:-0.161px;">Inspekt</div>
<div class="s fade" id="s9" style="left:137px;top:138.00px;font-size:12.3px;color:#0c0c0d;letter-spacing:-0.256px;">Konsc</div>
<div class="s fade" id="s10" style="left:199.5px;top:138.00px;font-size:12.3px;color:#0c0c0d;letter-spacing:-0.487px;">Debugg</div>
<div class="s fade" id="s11" style="left:271.75px;top:138.00px;font-size:12.3px;color:#0c0c0d;letter-spacing:-0.327px;">Stilbearbeit</div>
<div class="s fade" id="s12" style="left:363.75px;top:138.00px;font-size:12.3px;color:#0c0c0d;letter-spacing:-0.382px;">Laufzeitana</div>
<div class="s fade" id="s13" style="left:455.5px;top:138.00px;font-size:12.3px;color:#0c0c0d;letter-spacing:-0.422px;">Speich</div>
<div class="s fade" id="s14" style="left:521.75px;top:138.00px;font-size:12.3px;color:#0c0c0d;letter-spacing:-0.422px;">Netzwerkana</div>
<div class="s fade" id="s15" style="left:621px;top:138.00px;font-size:12.3px;color:#0c0c0d;letter-spacing:-0.118px;">Web-Speic</div>
<div class="s fade" id="s16" style="left:710px;top:138.00px;font-size:12.3px;color:#0c0c0d;letter-spacing:-0.559px;">JS-Umgebu</div>
<div class="s" id="s17" style="left:354.5px;top:165.00px;font-size:10.4px;color:#737378;letter-spacing:0.027px;">HTML durchsuchen</div>
<div class="s" id="s18" style="left:556px;top:165.00px;font-size:12.0px;color:#0c0c0d;letter-spacing:0.174px;">Regeln</div>
<div class="s" id="s19" style="left:615.5px;top:165.00px;font-size:12.0px;color:#0060df;letter-spacing:0.181px;">Berechnet</div>
<div class="s" id="s20" style="left:694.5px;top:165.00px;font-size:12.0px;color:#0c0c0d;letter-spacing:-0.034px;">Layout</div>
<div class="s" id="s21" style="left:754px;top:165.00px;font-size:12.0px;color:#0c0c0d;letter-spacing:-0.139px;">Animationen</div>
<div class="s fade" id="s22" style="left:843px;top:165.00px;font-size:12.0px;color:#0c0c0d;letter-spacing:-0.377px;">Schrifta</div>
<div class="s" id="s23" style="left:572px;top:189.00px;font-size:10.4px;color:#737378;letter-spacing:-0.078px;">Stile filtern</div>
<div class="s" id="s24" style="left:824.6px;top:189.00px;font-size:10.5px;color:#4a4a4f;letter-spacing:0.049px;">Browser-Stile</div>
<div class="s" id="s25" style="left:564px;top:213.00px;font-size:12.2px;color:#0c0c0d;letter-spacing:-0.328px;">Box-Modell</div>
<div class="s" id="s26" style="left:562.8px;top:414.00px;font-size:10.4px;color:#4a4a4f;letter-spacing:-0.025px;">32×40</div>
<div class="s" id="s27" style="left:836.8px;top:414.00px;font-size:10.4px;color:#4a4a4f;letter-spacing:-0.029px;">static</div>
<div class="s" id="s28" style="left:25.7px;top:685.00px;font-size:10.5px;color:#737373;letter-spacing:-0.187px;">et.custom…</div>
<div class="s" id="s29" style="left:99.5px;top:685.00px;font-size:10.5px;color:#0074e8;letter-spacing:0.024px;">toolbaritem#stop-reload-button.chromecla…</div>
<div class="s" id="s30" style="left:332.3px;top:685.00px;font-size:10.5px;color:#0c0c0d;letter-spacing:0.099px;">toolbarbutton</div>
<div class="s fade" id="s31" style="left:398.3px;top:685.00px;font-size:10.5px;color:#737373;letter-spacing:0.042px;">#reload-button.toolbarbu</div>
<!-- ===== box model ===== -->
<div style="left:584px;top:255px;width:258px;height:127px;background:#eefa80;outline:1px dotted #a6cdf6;outline-offset:-1px"></div>
<div style="left:603px;top:274px;width:220px;height:90px;background:#6a6a6a;outline:1px dotted #a6cdf6"></div>
<div style="left:620px;top:291px;width:186px;height:56px;background:#8878d8;outline:1px dotted #ececfa;outline-offset:-1px"></div>
<div style="left:639px;top:310px;width:148px;height:18px;background:#9fd9ee"></div>
<div class="m" style="left:590.3px;top:261.00px;color:#0074e8;">Außenabstand</div>
<div class="m" style="left:708.2px;top:261.00px;color:#0074e8;">0</div>
<div class="m" style="left:608.8px;top:279.00px;color:#fff;">Rand</div>
<div class="m" style="left:708.2px;top:279.00px;color:#fff;">0</div>
<div class="m" style="left:626.8px;top:297.00px;color:#fff;">Innenabstand</div>
<div class="m" style="left:708.2px;top:297.00px;color:#fff;">0</div>
<div class="m" style="left:592.3px;top:315.00px;color:#0074e8;">0</div>
<div class="m" style="left:608.2px;top:315.00px;color:#fff;">0</div>
<div class="m" style="left:627.3px;top:315.00px;color:#fff;">0</div>
<div class="m" style="left:696.8px;top:315.00px;color:#0074e8;">32×40</div>
<div class="m" style="left:792.3px;top:315.00px;color:#fff;">0</div>
<div class="m" style="left:810.6px;top:315.00px;color:#fff;">0</div>
<div class="m" style="left:822.6px;top:315.00px;color:#0074e8;">-32</div>
<div class="m" style="left:708.2px;top:333.00px;color:#fff;">0</div>
<div class="m" style="left:708.2px;top:351.00px;color:#fff;">0</div>
<div class="m" style="left:708.2px;top:369.00px;color:#0074e8;">0</div>
<!-- ===== computed props ===== -->
<svg class="tw" style="left:555px;top:439.6px" width="5.6" height="8.2" viewBox="0 0 6 9" preserveAspectRatio="none"><path d="M0 0 L6 4.5 L0 9Z"/></svg>
<div class="m" style="left:564.7px;top:440.00px;color:#0074e8;">border-bottom-left-radius</div>
<div class="m" style="left:564.7px;top:454.00px;color:#dd00a9;">0px</div>
<svg class="tw" style="left:555px;top:472.9px" width="5.6" height="8.2" viewBox="0 0 6 9" preserveAspectRatio="none"><path d="M0 0 L6 4.5 L0 9Z"/></svg>
<div class="m" style="left:564.7px;top:473.00px;color:#0074e8;">border-bottom-right-radius</div>
<div class="m" style="left:564.7px;top:488.00px;color:#dd00a9;">0px</div>
<svg class="tw" style="left:555px;top:506.2px" width="5.6" height="8.2" viewBox="0 0 6 9" preserveAspectRatio="none"><path d="M0 0 L6 4.5 L0 9Z"/></svg>
<div class="m" style="left:564.7px;top:506.00px;color:#0074e8;">border-top-left-radius</div>
<div class="m" style="left:564.7px;top:521.00px;color:#dd00a9;">0px</div>
<svg class="tw" style="left:555px;top:539.5px" width="5.6" height="8.2" viewBox="0 0 6 9" preserveAspectRatio="none"><path d="M0 0 L6 4.5 L0 9Z"/></svg>
<div class="m" style="left:564.7px;top:540.00px;color:#0074e8;">border-top-right-radius</div>
<div class="m" style="left:564.7px;top:554.00px;color:#dd00a9;">0px</div>
<svg class="tw" style="left:555px;top:572.8px" width="5.6" height="8.2" viewBox="0 0 6 9" preserveAspectRatio="none"><path d="M0 0 L6 4.5 L0 9Z"/></svg>
<div class="m" style="left:564.7px;top:573.00px;color:#0074e8;">color</div>
<div style="position:absolute;left:564.7px;top:588.0px;width:10.4px;height:10.4px;border-radius:50%;background:#000"></div>
<div class="m" style="left:579.8px;top:587.00px;color:#dd00a9;">rgb(0, 0, 0)</div>
<svg class="tw" style="left:555px;top:606.1px" width="5.6" height="8.2" viewBox="0 0 6 9" preserveAspectRatio="none"><path d="M0 0 L6 4.5 L0 9Z"/></svg>
<div class="m" style="left:564.7px;top:606.00px;color:#0074e8;">font-family</div>
<div class="m" style="left:564.7px;top:621.00px;color:#dd00a9;">Tahoma</div>
<svg class="tw" style="left:555px;top:639.4px" width="5.6" height="8.2" viewBox="0 0 6 9" preserveAspectRatio="none"><path d="M0 0 L6 4.5 L0 9Z"/></svg>
<div class="m" style="left:564.7px;top:640.00px;color:#0074e8;">font-feature-settings</div>
<div class="m" style="left:564.7px;top:654.00px;color:#dd00a9;">normal</div>
<svg class="tw" style="left:555px;top:672.7px" width="5.6" height="8.2" viewBox="0 0 6 9" preserveAspectRatio="none"><path d="M0 0 L6 4.5 L0 9Z"/></svg>
<div class="m" style="left:564.7px;top:673.00px;color:#0074e8;">font-kerning</div>
<div class="m" style="left:564.7px;top:687.00px;color:#dd00a9;">auto</div>
</body></html>
